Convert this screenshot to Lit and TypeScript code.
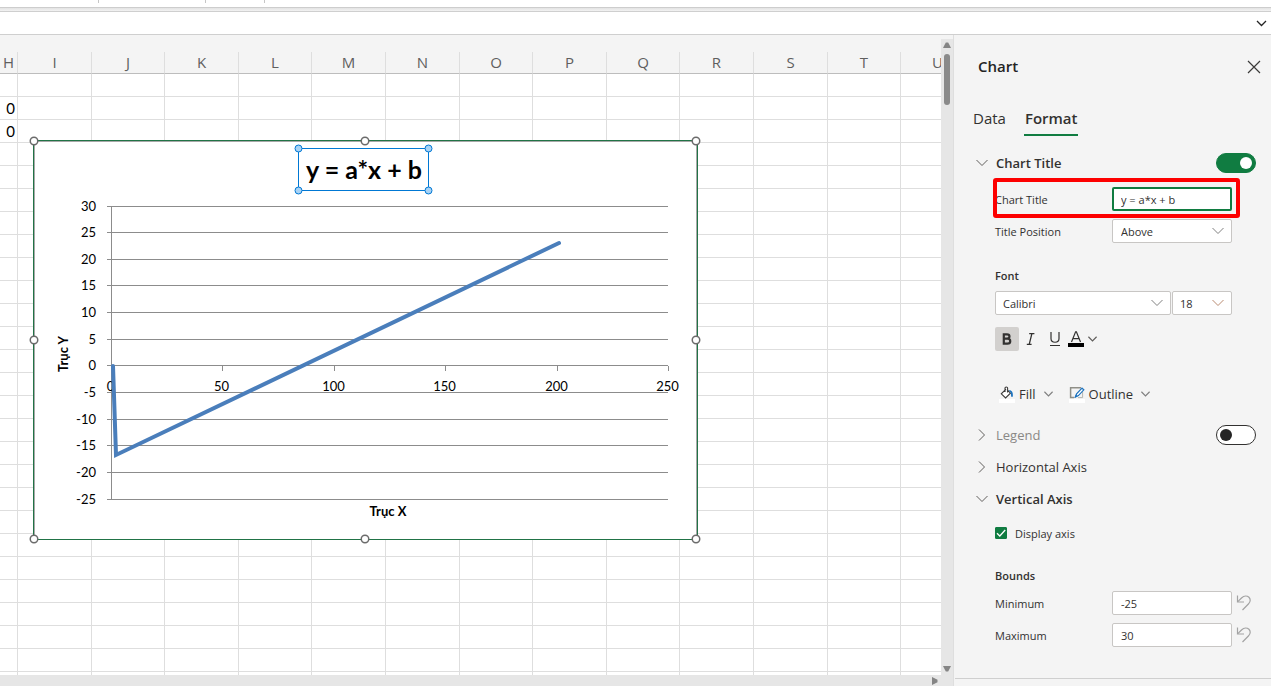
import { LitElement, html, svg, css, nothing } from "lit";
import { customElement, property, state } from "lit/decorators.js";
import { classMap } from "lit/directives/class-map.js";

const chevronDown = (w = 12) => html`<svg class="chev" width=${w} height="8" viewBox="0 0 12 8" preserveAspectRatio="xMidYMid meet">
  <path d="M0.5 1 L6 6.5 L11.5 1" fill="none" stroke="currentColor" stroke-width=${w < 12 ? 1.6 : 1}/></svg>`;
const chevronRight = html`<svg class="chev" width="12" height="12" viewBox="0 0 12 12">
  <path d="M3 0.5 L8.5 6 L3 11.5" fill="none" stroke="currentColor" stroke-width="1"/></svg>`;

/* ---------- Embedded chart ---------- */
@customElement("sheet-chart")
export class SheetChart extends LitElement {
  @property() heading = "";
  static styles = css`
    :host { display: block; line-height: 0; }
    .axis { font: 13px Lato, Carlito, sans-serif; fill: #000; }
    .name { font: bold 13px Lato, Carlito, sans-serif; fill: #000; }
    .title { font: bold 25px Lato, Carlito, sans-serif; fill: #000; }
    .end { text-anchor: end; }
    .mid { text-anchor: middle; }
    .line { stroke: #8c8c8c; stroke-width: 1; fill: none; shape-rendering: crispEdges; }
    .series { stroke: #4a7ebb; stroke-width: 4; fill: none; stroke-linecap: round; stroke-linejoin: miter; }
    .handle { fill: #fff; stroke: #6b6b6b; stroke-width: 1.5; }
    .edit { fill: none; stroke: #0078d4; }
    .edit-handle { fill: #a9d3f5; stroke: #0078d4; }
  `;
  render() {
    const values = [30, 25, 20, 15, 10, 5, 0, -5, -10, -15, -20, -25];
    const y = (v: number) => Math.floor(70 + (30 - v) * 5.33) + 0.5;
    const x = (v: number) => Math.round(82 + v * 2.228) + 0.5;
    const corners = [[5, 5], [336, 5], [667, 5], [5, 204], [667, 204], [5, 403], [336, 403], [667, 403]];
    return html`<svg width="674" height="408" viewBox="0 0 674 408" role="img" aria-label=${this.heading}>
      <rect x="4.5" y="4.5" width="664" height="399" fill="#fff" stroke="#217346"/>
      <path d="M5.5 403 V5.5 H667.5 V403" fill="none" stroke="#a8a8a8"/>
      ${values.map(v => svg`<path class="line" d="M78 ${y(v)} H639"/>
        <text class="axis end" x="67" y=${y(v) + 4}>${v}</text>`)}
      <path class="line" d="M82.5 70 V363"/>
      ${[50, 100, 150, 200, 250].map(v => svg`<path class="line" d="M${x(v)} 230 V235"/>`)}
      ${[0, 50, 100, 150, 200, 250].map(v => svg`<text class="axis mid" x=${x(v) - 1} y="255">${v}</text>`)}
      <polyline class="series" points="84,230 87,319 530,107"/>
      <text class="name mid" x="359" y="380">Trục X</text>
      <text class="name mid" transform="translate(39 218) rotate(-90)">Trục Y</text>
      <text class="title mid" x="335" y="43">${this.heading}</text>
      <rect class="edit" x="269.5" y="12.5" width="130" height="42"/>
      ${[[269.5, 12.5], [399.5, 12.5], [269.5, 54.5], [399.5, 54.5]].map(([cx, cy]) => svg`<circle class="edit-handle" cx=${cx} cy=${cy} r="3.5"/>`)}
      ${corners.map(([cx, cy]) => svg`<circle class="handle" cx=${cx} cy=${cy} r="3.75"/>`)}
    </svg>`;
  }
}

/* ---------- Worksheet grid ---------- */
@customElement("sheet-grid")
export class SheetGrid extends LitElement {
  @property() heading = "";
  static styles = css`
    :host { display: grid; grid-template-columns: minmax(0, 1fr) 12px; grid-template-rows: minmax(0, 1fr) 11px; background: #f4f4f4; min-width: 0; min-height: 0; border-right: 1px solid #dedede; }
    .view { overflow: hidden; position: relative; padding-top: 17px; }
    table { border-collapse: separate; border-spacing: 0; table-layout: fixed; width: 974px; }
    th, td { box-sizing: border-box; padding: 0; border-right: 1px solid #dedede; border-bottom: 1px solid #dedede; }
    th { height: 22px; padding-bottom: 2px; font: 15px/18px "Open Sans", "Noto Sans", sans-serif; color: #5f5f5f; text-align: center; border-bottom-color: #bdbdbd; }
    td { height: 23px; background: #fff; text-align: right; padding-right: 2px; font: 15px/22px Lato, sans-serif; color: #000; }
    .narrow { width: 18px; }
    .w73 { width: 73px; }
    .w74 { width: 74px; }
    sheet-chart { position: absolute; left: 29px; top: 101px; }
    .vbar { margin-top: 4px; background: #e6e6e6; display: flex; flex-direction: column; align-items: center; padding: 3px 0; }
    .vbar svg, .hbar svg { display: block; flex: none; }
    .thumb { width: 6px; height: 51px; border-radius: 3px; background: #8a8a8a; margin-top: 6px; }
    .grow { flex: 1; }
    .hbar { grid-column: 1 / 3; background: #e6e6e6; display: flex; justify-content: flex-end; align-items: center; padding-right: 15px; }
  `;
  render() {
    const cols = ["H", "I", "J", "K", "L", "M", "N", "O", "P", "Q", "R", "S", "T", "U"];
    const wide = new Set(["I", "K", "M", "N", "P", "R", "S", "U"]);
    const cls = (c: string) => (c === "H" ? "narrow" : wide.has(c) ? "w74" : "w73");
    const rows = Array.from({ length: 27 }, (_, r) => r);
    return html`
      <div class="view">
        <table>
          <thead><tr>${cols.map(c => html`<th scope="col" class=${cls(c)}>${c}</th>`)}</tr></thead>
          <tbody>${rows.map(r => html`<tr>${cols.map(c => html`<td>${c === "H" && (r === 1 || r === 2) ? "0" : nothing}</td>`)}</tr>`)}</tbody>
        </table>
        <sheet-chart .heading=${this.heading}></sheet-chart>
      </div>
      <div class="vbar">
        <svg width="8" height="6"><path d="M0 6 L2.8 0.5 H5.2 L8 6 Z" fill="#858585"/></svg>
        <div class="thumb"></div><div class="grow"></div>
        <svg width="8" height="6"><path d="M0 0 H8 L5.2 5.5 H2.8 Z" fill="#858585"/></svg>
      </div>
      <div class="hbar"><svg width="6" height="8"><path d="M0 0 V8 L5.5 5.2 V2.8 Z" fill="#858585"/></svg></div>`;
  }
}

/* ---------- Chart format pane ---------- */
@customElement("chart-pane")
export class ChartPane extends LitElement {
  @property() heading = "";
  static styles = css`
    :host { display: flex; flex-direction: column; width: 317px; flex: none; box-sizing: border-box; background: #f4f4f4; color: #323130; font: 12px/16px "Open Sans", "Noto Sans", sans-serif; }
    * { box-sizing: border-box; }
    button, input, select { font: inherit; color: inherit; margin: 0; }
    button { background: none; border: 0; padding: 0; display: flex; align-items: center; }
    svg { display: block; flex: none; }
    header { display: flex; justify-content: space-between; align-items: center; height: 32px; margin-top: 16px; padding: 0 10px 0 24px; }
    h2 { margin: 0; padding-bottom: 2px; font-size: 15px; line-height: 20px; font-weight: 600; color: #242424; }
    .tabs { display: flex; gap: 17px; padding: 0 18px; margin-top: 19px; height: 34px; }
    .tab { font-size: 15px; height: 34px; padding: 0 1px; border-bottom: 2px solid transparent; }
    .tab.on { font-weight: 600; border-color: #107c41; }
    .body { flex: 1; padding: 11px 15px 0 22px; }
    .sec { display: flex; align-items: center; height: 32px; }
    .sec button { flex: 1; gap: 8px; font-size: 13px; line-height: 20px; }
    .sec.open button { font-weight: 600; }
    .sec.dim button { color: #8a8886; }
    .sec .chev { color: #605e5c; }
    .fields { padding: 4px 0 0 19px; }
    .field { display: grid; grid-template-columns: 117px 120px 1fr; align-items: center; height: 32px; position: relative; }
    .field label, .tick label { font-size: 11px; padding-top: 1px; }
    .mark { position: absolute; left: -2px; top: -5px; width: 247px; height: 40px; border: 4px solid #fd0000; border-radius: 3px; pointer-events: none; }
    .box { width: 100%; height: 24px; background: #fff; border: 1px solid #c8c6c4; border-radius: 2px; padding: 1px 8px 0; font-size: 11px; outline: none; }
    .focus { border: 2px solid #107c41; padding: 0 7px; }
    .drop { display: grid; align-items: center; }
    .drop > * { grid-area: 1 / 1; }
    .drop select { appearance: none; padding-top: 2px; }
    .drop .chev { justify-self: end; margin-right: 8px; color: #808080; pointer-events: none; }
    .drop .chev + .chev { display: none; }
    .size .chev { color: #b98a70; }
    .sub { margin: 16px 0 0; height: 24px; font-size: 11px; line-height: 26px; font-weight: 600; }
    .font { display: grid; grid-template-columns: 177px 60px; height: 32px; align-items: center; }
    .font .drop:first-child { width: 176px; }
    .font .box { padding-left: 7px; }
    .tools { display: flex; align-items: center; height: 40px; }
    .tools button { width: 24px; height: 24px; justify-content: center; border-radius: 2px; }
    .tools .pressed { background: #d2d0ce; }
    .tools .color { width: 36px; gap: 4px; justify-content: flex-start; padding-left: 1px; }
    .tools .chev { color: #605e5c; }
    .paint { display: flex; align-items: center; height: 32px; gap: 16px; margin: 19px 0 9px; padding-left: 4px; }
    .paint button { font-size: 13px; gap: 3px; line-height: 20px; }
    .paint .chev { margin-left: 5px; color: #808080; }
    .switch { appearance: none; width: 40px; height: 20px; border-radius: 10px; border: 1px solid #323130; background: #fff; display: flex; align-items: center; padding: 0 3px; }
    .switch::before { content: ""; width: 12px; height: 12px; border-radius: 50%; background: #242424; }
    .switch:checked { background: #107c41; border-color: #107c41; justify-content: flex-end; padding: 0 3px; }
    .switch:checked::before { background: #fff; }
    .tick { display: flex; align-items: center; gap: 8px; height: 28px; }
    .check { display: grid; width: 12px; height: 12px; }
    .check > * { grid-area: 1 / 1; pointer-events: none; }
    .check input { appearance: none; width: 12px; height: 12px; border: 1px solid #107c41; border-radius: 1px; pointer-events: auto; }
    .check input:checked { background: #107c41; }
    .undo { margin-left: 4px; }
    footer { border-top: 1px solid #cfcfcf; height: 8px; margin-left: 1px; }
  `;

  private section(title: string, open: boolean, opts: { dim?: boolean; toggle?: boolean } = {}) {
    return html`<div class=${classMap({ sec: true, open, dim: !!opts.dim })}>
      <button aria-expanded=${open}>${open ? chevronDown() : chevronRight}<span>${title}</span></button>
      ${opts.toggle === undefined ? nothing : html`<input class="switch" type="checkbox" role="switch" aria-label="${title}" .checked=${opts.toggle}>`}
    </div>`;
  }
  private bound(id: string, label: string, value: string) {
    return html`<div class="field"><label for=${id}>${label}</label><input class="box" id=${id} .value=${value}>
      <button class="undo" aria-label="Reset"><svg width="16" height="18" viewBox="0 0 16 18" fill="none" stroke="#a3a3a3" stroke-width="1.2">
        <path d="M1.5 1.5 V8 H8"/><path d="M1.8 7.6 L5.5 4 C7 2.5 8 2 9.6 2 C12.3 2 14.2 3.8 14.2 6.2 C14.2 7.8 13.6 8.8 12.4 10 L6.5 16"/></svg></button></div>`;
  }
  render() {
    return html`
      <header><h2>Chart</h2>
        <button aria-label="Close"><svg width="14" height="14" viewBox="0 0 14 14"><path d="M1 1 L13 13 M13 1 L1 13" stroke="#3b3a39" stroke-width="1.2"/></svg></button>
      </header>
      <div class="tabs" role="tablist">
        <button class="tab" role="tab" aria-selected="false">Data</button>
        <button class="tab on" role="tab" aria-selected="true">Format</button>
      </div>
      <div class="body">
        ${this.section("Chart Title", true, { toggle: true })}
        <div class="fields">
          <div class="field"><label for="title">Chart Title</label>
            <input class="box focus" id="title" .value=${this.heading}
              @input=${(e: Event) => this.dispatchEvent(new CustomEvent("retitle", { detail: (e.target as HTMLInputElement).value }))}>
            <div class="mark"></div></div>
          <div class="field"><label for="pos">Title Position</label>
            <div class="drop"><select class="box" id="pos"><option>Above</option></select>${chevronDown()}</div></div>
          <h3 class="sub">Font</h3>
          <div class="font">
            <div class="drop"><select class="box" aria-label="Font name"><option>Calibri</option></select>${chevronDown()}</div>
            <div class="drop size"><select class="box" aria-label="Font size"><option>18</option></select>${chevronDown()}</div>
          </div>
          <div class="tools">
            <button class="pressed" aria-label="Bold" aria-pressed="true"><svg width="10" height="12" viewBox="0 0 10 12">
              <path d="M1.8 1.3 H5 C8.3 1.3 8.3 5.7 5 5.7 H1.8 Z M1.8 5.7 H5.4 C9.2 5.7 9.2 10.7 5.4 10.7 H1.8 Z" fill="none" stroke="#323130" stroke-width="2.2"/></svg></button>
            <button aria-label="Italic"><svg width="10" height="12" viewBox="0 0 10 12"><path d="M3.2 0.6 H8.4 M0.8 11.4 H5.6 M5.9 0.6 L3.2 11.4" fill="none" stroke="#323130" stroke-width="1.3"/></svg></button>
            <button aria-label="Underline"><svg width="10" height="16" viewBox="0 0 10 16"><path d="M1 1 V7.5 C1 12.5 9 12.5 9 7.5 V1 M0 14.5 H10" fill="none" stroke="#323130" stroke-width="1.2"/></svg></button>
            <button class="color" aria-label="Font color"><svg width="16" height="16" viewBox="0 0 16 16"><path d="M3.5 11 L7.6 0.8 H8.4 L12.5 11 M4.9 7.6 H11.1" fill="none" stroke="#323130" stroke-width="1.2"/><rect y="12" width="16" height="4"/></svg>${chevronDown(9)}</button>
          </div>
          <div class="paint">
            <button><svg width="17" height="17" viewBox="0 0 17 17"><rect y="13" width="16" height="4" fill="#fff"/>
              <path d="M7 3.2 L2.3 7.8 L6.6 12 L11.4 7.2 L8.6 4.2 M6 6 V2 C6 0.6 8.6 0.6 8.6 2 V6.5" fill="#fff" stroke="#3b3a39" stroke-width="1.1"/>
              <path d="M9.8 4.2 C12.8 3.8 14.4 6.2 13.8 10.8 H12.2 L11.8 7 Z" fill="#1e73be"/></svg>Fill${chevronDown(9)}</button>
            <button><svg width="17" height="17" viewBox="0 0 17 17"><rect y="13" width="16" height="4" fill="#fff"/>
              <path d="M12 1.8 H1.6 V11.6 H5" fill="none" stroke="#8f8f87" stroke-width="1.5"/>
              <path d="M13.6 6 V11.6 H9" fill="none" stroke="#b5b5b0" stroke-width="1"/>
              <path d="M6.6 10.8 L7.6 7.8 L13 2.2 L14.8 3.8 L9.4 9.6 Z" fill="#fff" stroke="#1e73be" stroke-width="1.2"/><path d="M5.2 12 L6.8 8.6 L8.7 10.4 Z" fill="#1e73be"/></svg>Outline${chevronDown(9)}</button>
          </div>
        </div>
        ${this.section("Legend", false, { dim: true, toggle: false })}
        ${this.section("Horizontal Axis", false)}
        ${this.section("Vertical Axis", true)}
        <div class="fields">
          <div class="tick"><span class="check"><input type="checkbox" id="axis" checked>
            <svg width="12" height="12" viewBox="0 0 12 12"><path d="M2 6.2 L4.8 9 L10.2 3" fill="none" stroke="#fff" stroke-width="1.3"/></svg></span>
            <label for="axis">Display axis</label></div>
          <h3 class="sub">Bounds</h3>
          ${this.bound("min", "Minimum", "-25")}
          ${this.bound("max", "Maximum", "30")}
        </div>
      </div>
      <footer></footer>`;
  }
}

/* ---------- Application shell ---------- */
@customElement("app-root")
export class AppRoot extends LitElement {
  @state() private heading = "y = a*x + b";
  static styles = css`
    :host { display: flex; flex-direction: column; height: 100vh; overflow: hidden; background: #f4f4f4; }
    .ribbon { height: 8px; flex: none; box-sizing: border-box; background: #fff; border-bottom: 1px solid #cdcdcd; display: grid; grid-template-columns: 98px 107px 59px 1fr; }
    .ribbon i { height: 3px; border-right: 1px solid #c6c6c6; margin-right: -1px; }
    .gap { height: 3px; flex: none; background: linear-gradient(#e3e3e3, #f2f2f2); }
    .formula { height: 24px; flex: none; box-sizing: border-box; background: #fff; border: solid #cfcfcf; border-width: 1px 0; display: flex; align-items: center; justify-content: flex-end; padding-right: 4px; }
    .formula button { background: none; border: 0; padding: 0; display: flex; }
    main { flex: 1; display: flex; min-height: 0; }
    sheet-grid { flex: 1; }
  `;
  render() {
    return html`
      <div class="ribbon"><i></i><i></i><i></i></div>
      <div class="gap"></div>
      <div class="formula"><button aria-label="Expand formula bar"><svg width="11" height="7" viewBox="0 0 11 7"><path d="M1 1 L5.5 5.5 L10 1" fill="none" stroke="#242424" stroke-width="1.3"/></svg></button></div>
      <main>
        <sheet-grid .heading=${this.heading}></sheet-grid>
        <chart-pane .heading=${this.heading} @retitle=${(e: CustomEvent) => (this.heading = e.detail)}></chart-pane>
      </main>`;
  }
}
